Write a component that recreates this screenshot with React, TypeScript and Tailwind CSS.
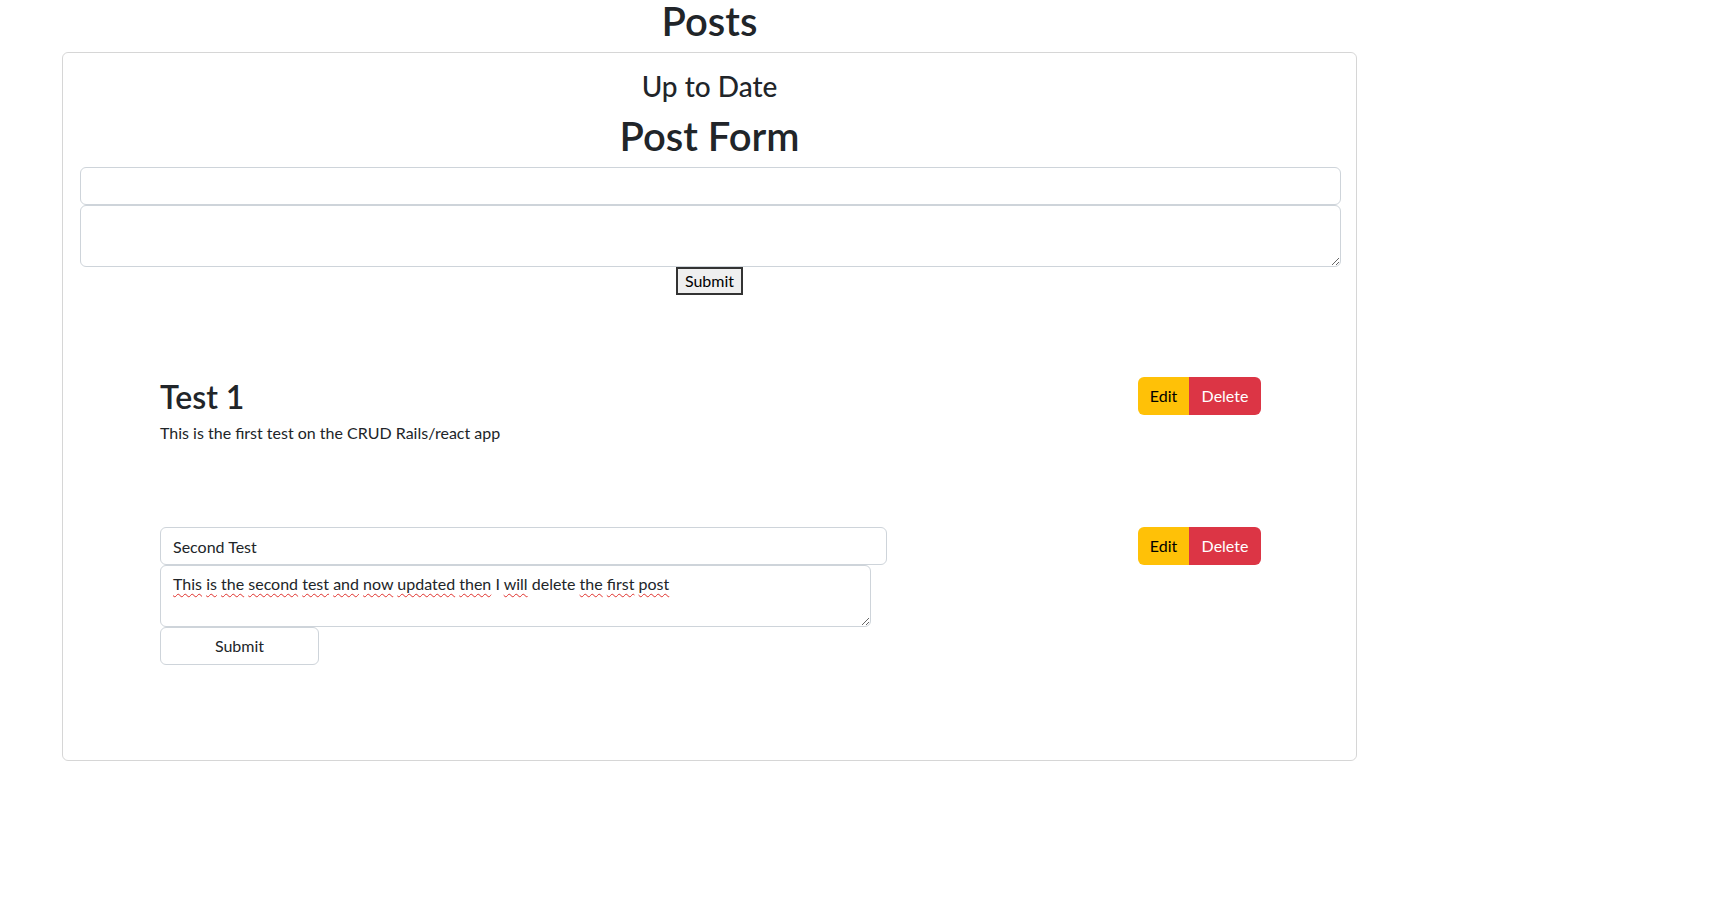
import React from 'react';

const squiggle = 'underline decoration-wavy decoration-[#e0312c] decoration-1 underline-offset-[3px]';

// words of the edited body, flagged = spellchecker underline
const BODY: [string, boolean][] = [
  ['This', true], ['is', true], ['the', true], ['second', true], ['test', true], ['and', true],
  ['now', true], ['updated', true], ['then', true], ['I', false], ['will', true], ['delete', false],
  ['the', true], ['first', true], ['post', true],
];

const ActionButtons = () => (
  <div className="flex">
    <button className="w-[51px] h-[38px] bg-[#ffc107] text-black text-[16px] leading-[24px] rounded-l-[6px]">Edit</button>
    <button className="w-[72px] h-[38px] bg-[#dc3545] text-white text-[16px] leading-[24px] rounded-r-[6px]">Delete</button>
  </div>
);

const App: React.FC = () => {
  return (
    <div className="min-h-screen bg-white text-[#212529] font-['Lato','Liberation_Sans',sans-serif]">
      <div className="ml-[62px] w-[1295px]">
        <h1 className="text-center text-[40px] leading-[42px] font-semibold mb-[10px]">Posts</h1>

        <div className="border border-[rgba(0,0,0,0.16)] rounded-[6px] p-4 pb-[95px]">
          <h3 className="text-center text-[28px] leading-[34px] font-medium">Up to Date</h3>
          <h1 className="text-center text-[40px] leading-[48px] font-semibold mt-[9px] mb-[7px]">Post Form</h1>

          {/* new post form */}
          <form onSubmit={e => e.preventDefault()}>
            <input className="block w-full h-[38px] ml-px border border-[#ced4da] rounded-[6px] px-3 text-[16px] outline-none" />
            <textarea className="block w-full h-[62px] ml-px border border-[#ced4da] rounded-[6px] px-3 py-[6px] text-[16px] outline-none" />
            <div className="flex justify-center">
              <button className="w-[67px] h-[28px] border-2 border-[#333] bg-[#efefef] text-[16px] leading-[22px] text-black">Submit</button>
            </div>
          </form>

          <div className="ml-[81px] mr-[79px]">
            <div className="mt-[82px] flex justify-between items-start">
              <div>
                <h2 className="text-[32px] leading-[39px] font-semibold">Test 1</h2>
                <p className="mt-[5px] text-[16px] leading-[24px]">This is the first test on the CRUD Rails/react app</p>
              </div>
              <ActionButtons />
            </div>

            <div className="mt-[82px] flex justify-between items-start">
              <div>
                <input
                  readOnly
                  value="Second Test"
                  className="block w-[727px] h-[38px] border border-[#ced4da] rounded-[6px] px-3 text-[16px] outline-none"
                />
                <div className="w-[711px] h-[62px] border border-[#ced4da] rounded-[6px] px-3 py-[6px] text-[16px] leading-[24px] resize overflow-auto">
                  {BODY.map(([w, flagged], i) => (
                    <React.Fragment key={i}>
                      <span className={flagged ? squiggle : ''}>{w}</span>
                      {i < BODY.length - 1 ? ' ' : ''}
                    </React.Fragment>
                  ))}
                </div>
                <button className="block w-[159px] h-[38px] bg-white border border-[#ced4da] rounded-[6px] text-[16px] leading-[24px]">Submit</button>
              </div>
              <ActionButtons />
            </div>
          </div>
        </div>
      </div>
    </div>
  );
};

export default App;
